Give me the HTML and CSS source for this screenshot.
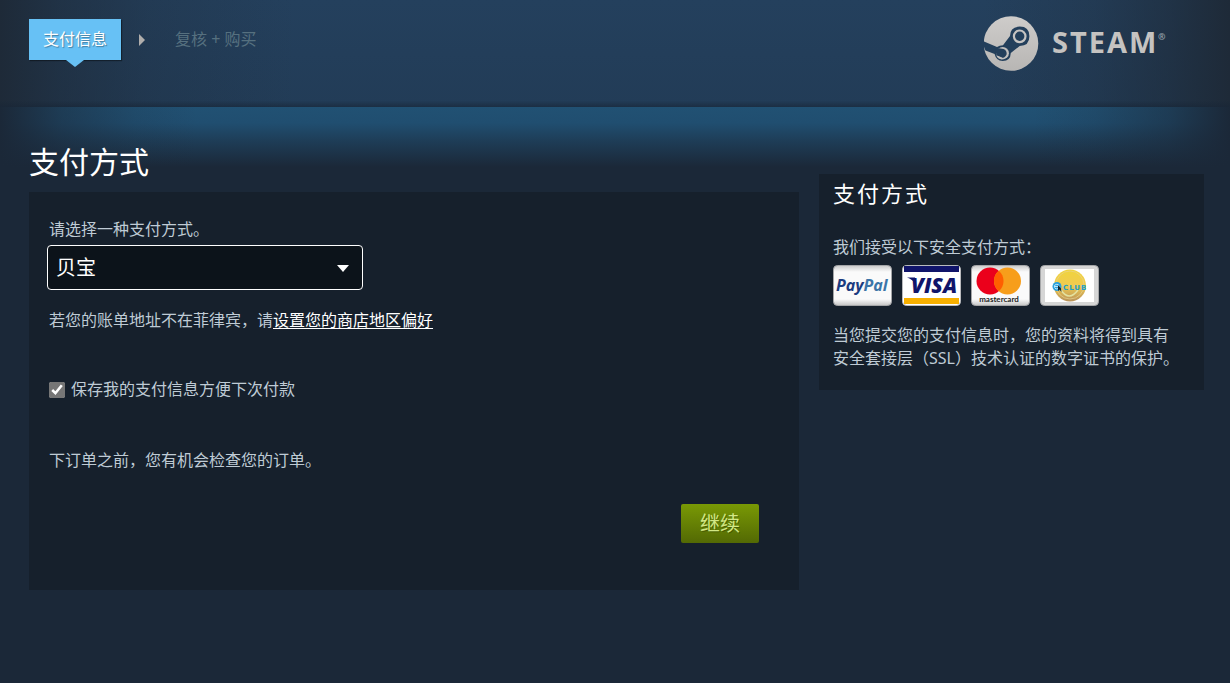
FILE: index.html
```html
<!DOCTYPE html>
<html lang="zh-CN">
<head>
<meta charset="utf-8">
<meta name="viewport" content="width=device-width, initial-scale=1">
<title>支付信息</title>
<link rel="stylesheet" href="styles.css">
</head>
<body>
<header class="header">
  <nav class="steps" aria-label="结算步骤">
    <span class="step step-active" aria-current="step">支付信息</span>
    <svg class="step-arrow" width="6" height="12" viewBox="0 0 6 12" aria-hidden="true"><path d="M0 0 6 6 0 12Z" fill="#b0aeac"/></svg>
    <span class="step">复核 + 购买</span>
  </nav>
  <svg class="logo" width="184" height="56" viewBox="0 0 184 56" role="img" aria-label="Steam">
    <defs>
      <linearGradient id="silver" x1="0" y1="0" x2="0" y2="1"><stop offset="0" stop-color="#ceccca"/><stop offset="1" stop-color="#b8b6b4"/></linearGradient>
    </defs>
    <circle cx="27" cy="27.500" r="27.300" fill="url(#silver)"/>
    <path d="M-1 25 13 31Q15.500 29.300 19 29.300L26 20Q26.200 10.600 35.700 10.600Q45.400 10.600 45.400 20.300Q45.400 30 35.700 30L26.800 37Q26.500 45 18.700 45Q12 44.600 10.600 38L1.500 34.500Q-1 30-1 25Z" fill="#233f5b"/>
    <circle cx="35.700" cy="20.300" r="5.800" fill="none" stroke="#c5c3c1" stroke-width="2.200"/>
    <circle cx="18.700" cy="37.200" r="6.200" fill="#c1bfbd"/>
    <path d="M12 32.500 15 32.300 19.500 33A4.400 4.400 0 0 1 17 41.500L13 40Q11 36 12 32.500Z" fill="#233f5b"/>
    <path d="M12.300 39.200 16.200 40.800A4.500 4.500 0 0 0 18 41.600L18 43.400Q13.500 43 12.300 39.200Z" fill="#c1bfbd"/>
    <text class="logo-word" x="68" y="37">STEAM</text>
    <text class="logo-mark" x="174" y="24">®</text>
  </svg>
</header>
<main class="content">
  <section class="payment">
    <h1 class="title">支付方式</h1>
    <form class="panel payment-form">
      <label class="label" for="method">请选择一种支付方式。</label>
      <div class="select-wrap">
        <select class="select" id="method"><option>贝宝</option></select>
        <svg class="select-arrow" width="12" height="7" viewBox="0 0 12 7" aria-hidden="true"><path d="M0 0H12L6 7Z" fill="#fff"/></svg>
      </div>
      <p class="region">若您的账单地址不在菲律宾，请<a class="link" href="#">设置您的商店地区偏好</a></p>
      <label class="save"><input class="checkbox" type="checkbox" checked>保存我的支付信息方便下次付款</label>
      <p class="notice">下订单之前，您有机会检查您的订单。</p>
      <button class="continue" type="button">继续</button>
    </form>
  </section>
  <aside class="panel accepted">
    <h2 class="subtitle">支付方式</h2>
    <p class="text">我们接受以下安全支付方式：</p>
    <div class="cards">
      <svg class="card" width="59" height="41" viewBox="0 0 59 41" role="img" aria-label="PayPal">
        <defs>
          <linearGradient id="shade" x1="0" y1="0" x2="0" y2="1"><stop offset="0" stop-color="#c9c9c9"/><stop offset=".16" stop-color="#fafafa"/><stop offset=".84" stop-color="#fafafa"/><stop offset="1" stop-color="#c4c4c4"/></linearGradient>
          <linearGradient id="ball" x1="0" y1="0" x2="0" y2="1"><stop offset="0" stop-color="#f0d43c"/><stop offset=".5" stop-color="#f0cb50"/><stop offset="1" stop-color="#b8925a"/></linearGradient>
        </defs>
        <rect x=".5" y=".5" width="58" height="40" rx="4" fill="url(#shade)" stroke="#a5a6a8"/>
        <text class="paypal" x="3" y="26"><tspan fill="#1c3c80">Pay</tspan><tspan fill="#3b74a8">Pal</tspan></text>
      </svg>
      <svg class="card" width="59" height="41" viewBox="0 0 59 41" role="img" aria-label="Visa">
        <rect x=".5" y=".5" width="58" height="40" rx="4" fill="#fff" stroke="#b9babd"/>
        <path fill="#10146a" d="M2 1H57V7H2Z"/><path fill="#f8b000" d="M2 33H57V39H2Z"/>
        <text class="visa" x="9" y="28">VISA</text>
        <path fill="#10146a" d="M5 12.500H13L14 19Q10 14 5 12.500Z"/>
      </svg>
      <svg class="card" width="59" height="41" viewBox="0 0 59 41" role="img" aria-label="Mastercard">
        <rect x=".5" y=".5" width="58" height="40" rx="4" fill="url(#shade)" stroke="#a5a6a8"/>
        <circle cx="19" cy="16" r="13.500" fill="#eb001b"/><circle cx="36.500" cy="16" r="13.500" fill="#f79e1b"/>
        <path fill="#ff5f00" d="M27.750 5.700A13.500 13.500 0 0 1 27.750 26.300A13.500 13.500 0 0 1 27.750 5.700Z"/>
        <text class="mastercard" x="28" y="37" text-anchor="middle">mastercard</text>
      </svg>
      <svg class="card" width="59" height="41" viewBox="0 0 59 41" role="img" aria-label="eClub">
        <rect x=".5" y=".5" width="58" height="40" rx="4" fill="#d6d6d6" stroke="#a5a6a8"/>
        <path fill="#fff" d="M5 4H54V37H5Z"/>
        <circle cx="30" cy="20.500" r="16" fill="url(#ball)"/>
        <circle cx="30" cy="20" r="14" fill="none" stroke="#e8d390" stroke-width="1" opacity=".7"/>
        <path d="M21 25Q29 37 38 25" fill="none" stroke="#e3e2a0" stroke-width="1.500"/>
        <circle cx="17" cy="21.500" r="4.500" fill="#2aa0dc"/>
        <path d="M14.500 21.500H19A2.300 2.300 0 1 0 18 23.500" fill="none" stroke="#bde7fa" stroke-width="1"/>
        <path d="M18 20V26L19.500 24.500 21.500 27 21 23.500Z" fill="#17252e"/>
        <text class="eclub" x="23" y="25">CLUB</text>
      </svg>
    </div>
    <p class="text">当您提交您的支付信息时，您的资料将得到具有安全套接层（SSL）技术认证的数字证书的保护。</p>
  </aside>
</main>
</body>
</html>
```
FILE: styles.css
```css
* { box-sizing: border-box; }
body {
  margin: 0;
  min-height: 100vh;
  background: #1b2838;
  color: #bfcbd5;
  font-family: "Noto Sans", "Noto Sans CJK SC", sans-serif;
  font-size: 16px;
  line-height: 23px;
}
h1, h2, p { margin: 0; font-weight: 400; }
.header {
  display: flex;
  justify-content: space-between;
  align-items: flex-start;
  padding: 16px 62px 35px 29px;
  background:
    linear-gradient(to bottom, transparent 94%, rgba(23, 37, 54, .6)),
    linear-gradient(to right, #1e2a38 0, rgba(30, 42, 56, .6) 5%, rgba(30, 42, 56, .25) 12%, transparent 24%, transparent 80%, rgba(30, 42, 56, .25) 89%, rgba(30, 42, 56, .6) 95%, #1e2a38 100%),
    linear-gradient(to bottom, #24405d, #223c57);
}
.steps { display: flex; align-items: center; padding-top: 3px; }
.step { color: #56707f; white-space: nowrap; }
.step-active {
  position: relative;
  padding: 9px 14px;
  background: #67c1f5;
  color: #fff;
  text-shadow: 1px 1px 1px rgba(0, 0, 0, .35);
  box-shadow: 1px 1px 1px rgba(0, 0, 0, .4);
}
.step-active::after {
  content: "";
  position: absolute;
  top: 100%;
  left: 50%;
  margin-left: -9px;
  border: 9px solid transparent;
  border-top: 7px solid #67c1f5;
  border-bottom: 0;
}
.step-arrow { margin: 0 30px 0 18px; }
.logo { flex: none; }
.logo-word { fill: #c5c3c1; font: 700 29px "Noto Sans", sans-serif; letter-spacing: 2px; }
.logo-mark { fill: #9aa3ab; font: 700 9px "Noto Sans", sans-serif; }
.content {
  display: grid;
  grid-template-columns: 2fr 1fr;
  gap: 20px;
  align-items: start;
  padding: 33px 26px 60px 29px;
  background:
    linear-gradient(to right, #1b2838 0, rgba(27, 40, 56, .5) 5%, rgba(27, 40, 56, .15) 11%, transparent 16%, transparent 84%, rgba(27, 40, 56, .15) 89%, rgba(27, 40, 56, .5) 95%, #1b2838 100%) top / 100% 66px no-repeat,
    linear-gradient(to bottom, #215173 0, #204e70 16px, #1e3d57 34px, #1b2838 60px) top / 100% 66px no-repeat;
}
.title { margin-bottom: 8px; color: #fff; font-size: 30px; line-height: 44px; }
.panel { background: #16202c; }
.payment-form { display: flex; flex-direction: column; padding: 26px 40px 47px 20px; }
.select-wrap { position: relative; width: 316px; max-width: 100%; margin: 4px 0 19px -2px; }
.select {
  display: block;
  width: 100%;
  height: 45px;
  padding: 0 32px 0 8px;
  appearance: none;
  border: 1px solid #fff;
  border-radius: 4px;
  background: #0c131a;
  color: #fff;
  font: inherit;
  font-size: 20px;
}
.select-arrow { position: absolute; right: 14px; top: 20px; }
.link { color: #fff; text-decoration: underline; text-underline-offset: 2px; }
.save { display: flex; align-items: center; gap: 6px; margin-top: 46px; }
.checkbox { width: 16px; height: 16px; margin: 0; accent-color: #767676; }
.notice { margin: 48px 0 32px; }
.continue {
  align-self: flex-end;
  height: 39px;
  padding: 0 19px;
  border: 0;
  border-radius: 2px;
  background: linear-gradient(to bottom, #799905, #536904);
  color: #d2e885;
  font: inherit;
  font-size: 20px;
  text-shadow: 1px 1px 0 rgba(0, 0, 0, .25);
}
.accepted { margin-top: 34px; padding: 3px 21px 20px 14px; }
.subtitle { margin-bottom: 26px; color: #fff; font-size: 22px; line-height: 33px; letter-spacing: 2px; }
.cards { display: flex; flex-wrap: wrap; gap: 10px; margin: 6px 0 18px; }
.paypal { font: italic 700 16px "Open Sans", sans-serif; }
.visa { fill: #10146a; font: italic 800 21px "Open Sans", sans-serif; }
.mastercard { fill: #222; font: 700 8px Lato, sans-serif; }
.eclub { fill: #1f9fc5; font: 700 7px "DejaVu Sans", sans-serif; letter-spacing: 1px; }
```
